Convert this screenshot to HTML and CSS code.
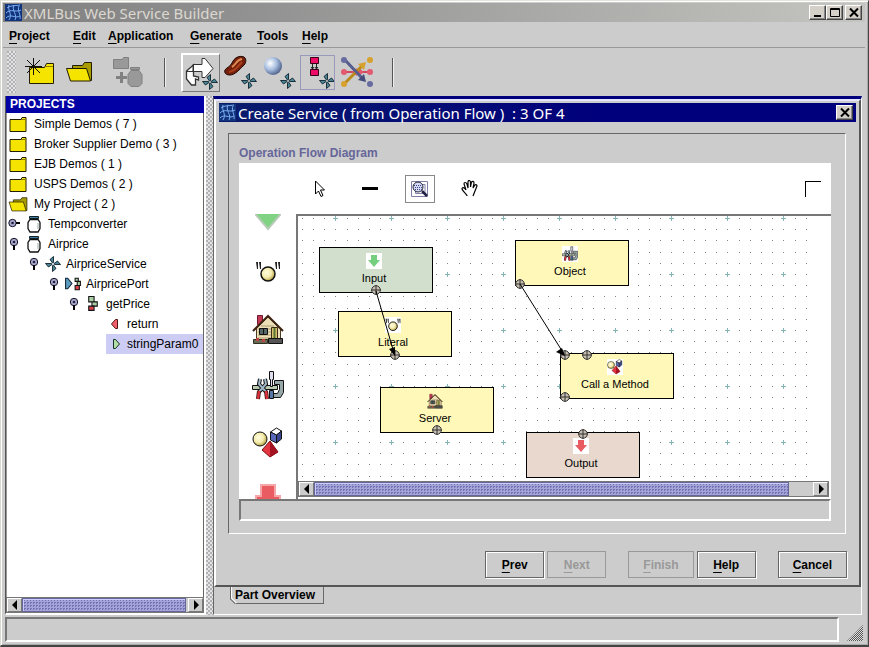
FILE: index.html
```html
<!DOCTYPE html>
<html lang="en">
<head>
<meta charset="utf-8">
<title>XMLBus Web Service Builder</title>
<link rel="stylesheet" href="styles.css">
</head>
<body>
<svg class="defs" aria-hidden="true">
  <defs>
    <radialGradient id="ball" cx=".35" cy=".35" r=".7"><stop offset="0" stop-color="#fff"/><stop offset=".5" stop-color="#a9bfe0"/><stop offset="1" stop-color="#4c5f88"/></radialGradient>
    <radialGradient id="gold" cx=".4" cy=".4" r=".7"><stop offset="0" stop-color="#fffde0"/><stop offset=".5" stop-color="#f4ecae"/><stop offset="1" stop-color="#a08820"/></radialGradient>
    <symbol id="logo" viewBox="0 0 17 17"><path fill="#12347c" d="M0 0h17v17H0z"/><path fill="none" stroke="#7fb0f4" d="M2 4c4-3 9-2 13-3M1 9c5-5 9 0 15-3M1 14c5-5 9 1 14-2M4 1c-2 5 4 9 0 15M9 1c-3 5 4 10 1 15M14 2c-2 4 2 9 1 13"/></symbol>
    <symbol id="folder" viewBox="0 0 19 17"><path fill="#f4e400" stroke="#221c00" d="M1.500 3.500h11l1-2h4v14h-16z"/><path fill="none" stroke="#8a7c00" d="M12.500 3.500h5"/></symbol>
    <symbol id="folder-open" viewBox="0 0 28 22"><path fill="#a89c00" stroke="#221c00" d="M7.500 7.500v-3h10l2-3h7v18h-3z"/><path fill="#f4e400" stroke="#221c00" d="M1.500 7.500h20l4 12.500H5.500z"/></symbol>
    <symbol id="jar" viewBox="0 0 14 18"><path fill="#3f7ca8" stroke="#122" d="M2.500 1.500h9v2h-9z"/><path fill="#fff" stroke="#111" stroke-width="1.300" d="M3 4.500h8l2 3v6l-2 3.500H3l-2-3.500v-6z"/><path stroke="#9aa" d="M11 8v6"/></symbol>
    <symbol id="pin-down" viewBox="0 0 12 14"><circle cx="6" cy="5" r="3.700" fill="#a8a8d0" stroke="#112"/><circle cx="6" cy="5" r="1.300" fill="#223"/><path stroke="#000" stroke-width="2" d="M6 8v5"/></symbol>
    <symbol id="pin-right" viewBox="0 0 12 14"><circle cx="4.500" cy="6" r="3.700" fill="#a8a8d0" stroke="#112"/><circle cx="4.500" cy="6" r="1.300" fill="#223"/><path stroke="#000" stroke-width="2" d="M8 6h4"/></symbol>
    <symbol id="fan" viewBox="0 0 16 16"><g fill="#4a8496" stroke="#0d242d" stroke-width=".9"><path d="M7.500 7L5 3.500 8.500.5v6z"/><path d="M9 7.500L12.500 5l3 3.500h-6z"/><path d="M8.500 9l2.500 3.500-3.500 3v-6z"/><path d="M7 8.500L3.500 11l-3-3.500h6z"/></g></symbol>
    <symbol id="blocks" viewBox="0 0 11 15"><g stroke="#111"><path fill="#a9d0a4" d="M1.500.5h5v5h-5zM4.500 5.500h5v4h-5z"/><path fill="#d8434c" d="M1.500 9.500h5v4h-5z"/></g></symbol>
    <symbol id="port-icon" viewBox="0 0 17 14"><path fill="#5b9cc0" stroke="#123" d="M1.500 1.500v10h2l4-5-4-5z"/><g stroke="#111"><path fill="#a9d0a4" d="M10.500 1.500h3v3h-3zM12.500 4.500h3v4h-3z"/><path fill="#d8434c" d="M10.500 8.500h4v4h-4z"/></g></symbol>
    <symbol id="down" viewBox="0 0 26 32"><path stroke-width="2" d="M6 1h14v11h5v4L13 30 1 16v-4h5z"/></symbol>
    <symbol id="house" viewBox="0 0 32 32"><path fill="#c43a55" stroke="#6d1b2b" d="M5.500 2.500h5v9h-5z"/><path fill="#ece0b8" stroke="#4b3b20" d="M4.500 15L16 4l12.500 12v11h-24z"/><path stroke="#b09c70" d="M9 13h13M6 16h20M6 19h20M6 22h20M6 25h20"/><path fill="#d8c070" stroke="#3c2a14" d="M19.500 14.500h6v12h-6z"/><path stroke="#573" stroke-width="2" d="M22.500 15v11"/><path fill="#566" stroke="#111" d="M7.500 15.500h8v6h-8zM11.500 15.500v6"/><path fill="none" stroke="#3e2312" stroke-width="2" d="M1 18L16 3l15 15"/><path fill="#656b56" stroke="#33301f" d="M1.500 26.500h14v4h-14z"/><path fill="#555" stroke="#111" d="M16.500 25.500h14v5h-14z"/><path fill="#b44" d="M4 25h3v3H4zM10 26h3v3h-3z"/></symbol>
    <symbol id="tools" viewBox="0 0 32 32"><path fill="#98a8a8" stroke="#111" d="M22.500 10.500h9v12l-3 5h-8v-4h5l2-4v-5h-5z"/><path fill="#b9cab0" stroke="#111" d="M.5 15.500h25v4H.5z"/><path fill="#dde" stroke="#111" d="M17.500 1.500h4v8h-1v7h-2v-7h-1z"/><path fill="#5577a8" stroke="#111" d="M17.500 20.500h4v8h-4z"/><path fill="none" stroke="#111" stroke-width="4" d="M8 9l-1 5 7 8M13 9l1 5-7 8"/><path fill="none" stroke="#9fb6c4" stroke-width="2" d="M8 9l-1 5 7 8M13 9l1 5-7 8"/><path fill="none" stroke="#311" stroke-width="4" d="M7 21l-1 8M14 21l1 8"/><path fill="none" stroke="#d8333c" stroke-width="2.500" d="M7 21l-1 8M14 21l1 8"/></symbol>
    <symbol id="shapes" viewBox="0 0 32 32"><circle cx="8" cy="12" r="7" fill="url(#gold)" stroke="#111"/><path fill="#fff" stroke="#111" d="M18.500 5l6-4 5 3-5 4z"/><path fill="#5868b8" stroke="#111" d="M18.500 5l6 3v8l-6-3z"/><path fill="#3b468c" stroke="#111" d="M24.500 8l5-4v8l-5 4z"/><path fill="#e33540" stroke="#711" d="M18 14l8 11-8 5-8-7z"/><path fill="#a31322" d="M18 14l8 11-8 5z"/></symbol>
    <symbol id="quote-ball" viewBox="0 0 26 22"><path fill="#222" d="M1 1h2v7H2zM4 1h2v7H5zM20 1h2v7h-1zM23 1h2v7h-1z"/><circle cx="13" cy="13" r="7" fill="url(#gold)" stroke="#111" stroke-width="1.500"/></symbol>
    <symbol id="port" viewBox="0 0 10 10"><circle cx="5" cy="5" r="4.300" fill="#c8beb0" stroke="#333"/><path stroke="#333" d="M5 0v10M0 5h10"/></symbol>
  </defs>
</svg>

<div class="window">
  <header class="titlebar">
    <svg class="logo"><use href="#logo"/></svg>
    <h1>XMLBus Web Service Builder</h1>
    <div class="win-buttons">
      <button aria-label="Minimize"><svg viewBox="0 0 12 11"><path stroke="#000" stroke-width="2" d="M2 9h7"/></svg></button>
      <button aria-label="Maximize"><svg viewBox="0 0 12 11"><path fill="none" stroke="#000" d="M1.500 1.500h9v8h-9zM1 2.500h10"/></svg></button>
      <button class="close" aria-label="Close"><svg viewBox="0 0 12 11"><path stroke="#000" stroke-width="2" d="M2 1.500l8 8M10 1.500l-8 8"/></svg></button>
    </div>
  </header>

  <nav class="menubar">
    <button><u>P</u>roject</button><button><u>E</u>dit</button><button><u>A</u>pplication</button><button><u>G</u>enerate</button><button><u>T</u>ools</button><button><u>H</u>elp</button>
  </nav>

  <div class="toolbar">
    <span class="grip"></span>
    <button class="tool" aria-label="New project"><svg width="30" height="28" viewBox="0 0 30 28"><path fill="#f4e400" stroke="#221c00" d="M4.500 9.500h15l2-4h7v20h-24z"/><path fill="none" stroke="#8a7c00" d="M21 8.500h7"/><path stroke="#111" d="M8.500 0v17M0 8.500h17M2 2l13 13M15 2L2 15"/></svg></button>
    <button class="tool" aria-label="Open project"><svg width="28" height="22"><use href="#folder-open"/></svg></button>
    <button class="tool wide" aria-label="Add application" disabled><svg width="32" height="32" viewBox="0 0 32 32"><g fill="#999" stroke="#808080"><path d="M1.500 3.500h9l1-2h5v11h-15z"/><path d="M18.500 11.500h9v2h-9zM19 14.500h8l3 4v9l-3 3h-8l-3-3v-9z"/></g><path stroke="#808080" stroke-width="3" d="M4 21.500h11M9.500 16v11"/></svg></button>
    <span class="separator"></span>
    <button class="tool pressed" aria-label="Create service"><svg width="34" height="34" viewBox="0 0 34 34"><path fill="#fff" stroke="#333" stroke-width="1.300" d="M10 8.500L2.500 15v8l5 6h4v-6l3 1v-3l-5-1v-6l3-2z"/><path fill="#fff" stroke="#333" d="M9 8.500h9v-6h3l8 10-8 9h-3v-6H9zM2.500 15.500h7M9.500 8.500v7"/><use href="#fan" x="18" y="18" width="16" height="16"/></svg></button>
    <button class="tool" aria-label="Service from bean"><svg width="34" height="34" viewBox="0 0 34 34"><path fill="#75200c" stroke="#210802" d="M2 15c2-3 5-3 7-7 2-5 7-8 12-6 3 2 2 7-1 9-3 3-8 9-13 9-4 0-6-2-5-5z"/><path fill="none" stroke="#e08a54" stroke-width="2" d="M9 12c4-2 4-7 10-8"/><path fill="none" stroke="#aa401c" stroke-width="2" d="M6 17c7-1 10-7 13-10"/><use href="#fan" x="18" y="18" width="16" height="16"/></svg></button>
    <button class="tool" aria-label="Service from object"><svg width="34" height="34" viewBox="0 0 34 34"><circle cx="11" cy="11" r="9" fill="url(#ball)"/><use href="#fan" x="18" y="18" width="16" height="16"/></svg></button>
    <button class="tool outlined" aria-label="Service from operation flow"><svg width="34" height="34" viewBox="0 0 34 34"><g fill="#ee0a66" stroke="#330018"><path d="M9.500 2.500h8v6h-8zM9.500 14.500h8v6h-8z"/></g><path fill="none" stroke="#222" d="M11.500 9v5M15.500 9v5M10 12l1.500 2 1.500-2M14 12l1.500 2 1.500-2"/><use href="#fan" x="18" y="18" width="16" height="16"/></svg></button>
    <button class="tool" aria-label="Router"><svg width="34" height="34" viewBox="0 0 34 34"><path stroke="#d2475c" stroke-width="2" d="M4 17h25"/><path fill="#e15a70" d="M12 17l5-4v8zM24 17l-5-4v8z"/><path stroke="#bb881c" stroke-width="3" d="M5 28L22 11"/><path fill="#d6a22d" d="M26 7l-2 8-6-6z"/><path stroke="#565c8c" stroke-width="3" d="M5 5l17 18"/><path fill="#454b7c" d="M26 27l-8-2 6-6z"/><circle cx="4" cy="5" r="3" fill="#676ca0"/><circle cx="4" cy="17" r="3" fill="#e15a70"/><circle cx="4" cy="29" r="3" fill="#d6a22d"/><circle cx="30" cy="5" r="3" fill="#d6a22d"/><circle cx="30" cy="17" r="3" fill="#e15a70"/><circle cx="30" cy="29" r="3" fill="#676ca0"/></svg></button>
    <span class="separator last"></span>
  </div>

  <div class="workspace">
    <aside class="projects">
      <h2>PROJECTS</h2>
      <ul class="tree">
        <li><span class="row folder"><svg class="ico"><use href="#folder"/></svg>Simple Demos ( 7 )</span></li>
        <li><span class="row folder"><svg class="ico"><use href="#folder"/></svg>Broker Supplier Demo ( 3 )</span></li>
        <li><span class="row folder"><svg class="ico"><use href="#folder"/></svg>EJB Demos ( 1 )</span></li>
        <li><span class="row folder"><svg class="ico"><use href="#folder"/></svg>USPS Demos ( 2 )</span></li>
        <li><span class="row folder"><svg class="ico"><use href="#folder-open"/></svg>My Project ( 2 )</span>
          <ul>
            <li><span class="row app"><svg class="pin"><use href="#pin-right"/></svg><svg class="ico"><use href="#jar"/></svg>Tempconverter</span></li>
            <li><span class="row app"><svg class="pin"><use href="#pin-down"/></svg><svg class="ico"><use href="#jar"/></svg>Airprice</span>
              <ul class="nested">
                <li><span class="row"><svg class="pin"><use href="#pin-down"/></svg><svg class="ico"><use href="#fan"/></svg>AirpriceService</span>
                  <ul class="nested">
                    <li><span class="row"><svg class="pin"><use href="#pin-down"/></svg><svg class="ico"><use href="#port-icon"/></svg>AirpricePort</span>
                      <ul class="nested">
                        <li><span class="row"><svg class="pin"><use href="#pin-down"/></svg><svg class="ico"><use href="#blocks"/></svg>getPrice</span>
                          <ul class="leaves">
                            <li><span class="row"><svg class="ico" viewBox="0 0 18 12"><path fill="#f0606c" stroke="#511" d="M10.500 1.500v9h-2l-4-4.500 4-4.500z"/></svg>return</span></li>
                            <li><span class="row selected"><svg class="ico" viewBox="0 0 18 12"><path fill="#b4dca8" stroke="#132" d="M6.500 1.500v9h2l4-4.500-4-4.500z"/></svg>stringParam0</span></li>
                          </ul>
                        </li>
                      </ul>
                    </li>
                  </ul>
                </li>
              </ul>
            </li>
          </ul>
        </li>
      </ul>
      <div class="scrollbar">
        <button aria-label="Scroll left"><svg viewBox="0 0 6 10"><path d="M5 0v10L0 5z"/></svg></button>
        <span class="thumb"></span><span class="track"></span>
        <button aria-label="Scroll right"><svg viewBox="0 0 6 10"><path d="M1 0v10l5-5z"/></svg></button>
      </div>
    </aside>
    <div class="divider"></div>

    <main class="desktop">
      <section class="dialog">
        <header class="dialog-title">
          <svg class="logo"><use href="#logo"/></svg>
          <h2>Create Service ( from Operation Flow )&nbsp; : 3 OF 4</h2>
          <div class="win-buttons"><button aria-label="Close dialog"><svg viewBox="0 0 12 11"><path stroke="#000" stroke-width="2" d="M2 1.500l8 8M10 1.500l-8 8"/></svg></button></div>
        </header>
        <div class="group">
          <h3>Operation Flow Diagram</h3>
          <div class="editor">
            <div class="editor-tools">
              <button aria-label="Select"><svg width="12" height="18" viewBox="0 0 12 18"><path fill="#fff" stroke="#000" d="M1.500 1v13l3-3 2.500 5.500 2-1L6.500 10h4z"/></svg></button>
              <button aria-label="Line"><svg width="16" height="4"><path d="M0 0h16v3H0z"/></svg></button>
              <button class="zoom" aria-label="Zoom"><span><svg width="18" height="18" viewBox="0 0 18 18"><path fill="none" stroke="#8080a8" d="M.5 1.500h16v15H.5zM5 4.500h9v9H4.500z"/><circle cx="7" cy="7" r="5" fill="#d4d8f4" stroke="#223"/><path stroke="#3a4488" stroke-dasharray="1 1" d="M3 5.500h8M4 7.500h7M4 9.500h7"/><path stroke="#224" stroke-width="2.500" d="M11 11l5 5"/></svg></span></button>
              <button aria-label="Pan"><svg width="18" height="18" viewBox="0 0 18 18"><path fill="#fff" stroke="#000" stroke-width="1.200" d="M6 16c0-2-4-4-5-7 0-2 2-2 4 1L3 4c0-2 2-2 3 0l1 4V2c0-2 2-2 2.500 0v5l1-5c1-1 2.500-1 2.500 1l-1 5 2-3c1-1 2 0 2 1l-2 5-2 5"/></svg></button>
              <span class="corner"></span>
            </div>
            <div class="palette">
              <button aria-label="Input"><svg class="input-arrow" width="26" height="32"><use href="#down"/></svg></button>
              <button aria-label="Literal"><svg width="26" height="22"><use href="#quote-ball"/></svg></button>
              <button aria-label="Server"><svg width="32" height="32"><use href="#house"/></svg></button>
              <button aria-label="Object"><svg width="32" height="32"><use href="#tools"/></svg></button>
              <button aria-label="Call a Method"><svg width="32" height="32"><use href="#shapes"/></svg></button>
              <button aria-label="Output"><svg class="output-arrow" width="26" height="32"><use href="#down"/></svg></button>
            </div>
            <div class="canvas-frame">
              <div class="canvas">
                <svg class="grid-dots" aria-hidden="true"><defs><pattern id="dots" x="4" y="-9" width="56" height="56" patternUnits="userSpaceOnUse"><path stroke="#808686" d="M0 .5h1M11 .5h1M22 .5h1M33 .5h1M45 .5h1M0 11.500h1M11 11.500h1M22 11.500h1M33 11.500h1M45 11.500h1M0 22.500h1M11 22.500h1M22 22.500h1M33 22.500h1M45 22.500h1M0 33.500h1M11 33.500h1M22 33.500h1M33 33.500h1M45 33.500h1M0 45.500h1M11 45.500h1M22 45.500h1M33 45.500h1M45 45.500h1"/><path stroke="#86b4b4" d="M31 11.500h5M33.500 9v5"/></pattern></defs><rect width="100%" height="100%" fill="url(#dots)"/></svg>
                <div class="node n-input"><svg><rect width="16" height="16" fill="#fff"/><path fill="#76cf7e" d="M5 2h6v5h3l-6 7-6-7h3z"/></svg>Input</div>
                <div class="node n-object"><svg><rect width="16" height="16" fill="#fff"/><use href="#tools" width="16" height="16"/></svg>Object</div>
                <div class="node n-literal"><svg><rect width="16" height="16" fill="#fff"/><use href="#quote-ball" y="1" width="16" height="14"/></svg>Literal</div>
                <div class="node n-method"><svg><rect width="16" height="16" fill="#fff"/><use href="#shapes" width="16" height="16"/></svg>Call a Method</div>
                <div class="node n-server"><svg><use href="#house" width="16" height="16"/></svg>Server</div>
                <div class="node n-output"><svg><rect width="16" height="16" fill="#fff"/><path fill="#e85c62" d="M5 2h6v5h3l-6 7-6-7h3z"/></svg>Output</div>
                <svg class="links" aria-hidden="true">
                  <g><use href="#port" x="73" y="69" width="10" height="10"/><use href="#port" x="92" y="134" width="10" height="10"/><use href="#port" x="134" y="209" width="10" height="10"/><use href="#port" x="217" y="63" width="10" height="10"/><use href="#port" x="262" y="134" width="10" height="10"/><use href="#port" x="284" y="134" width="10" height="10"/><use href="#port" x="262" y="176" width="10" height="10"/><use href="#port" x="280" y="213" width="10" height="10"/></g>
                  <path stroke="#000" d="M78 75L96 137M222 68L266 138"/>
                  <path d="M97 140l-6-7 6-2zM267 140l-9-4 6-4z"/>
                </svg>
              </div>
              <div class="scrollbar">
                <button aria-label="Scroll diagram left"><svg viewBox="0 0 6 10"><path d="M5 0v10L0 5z"/></svg></button>
                <span class="thumb"></span><span class="track long"></span>
                <button aria-label="Scroll diagram right"><svg viewBox="0 0 6 10"><path d="M1 0v10l5-5z"/></svg></button>
              </div>
            </div>
          </div>
          <div class="message"></div>
        </div>
        <footer class="actions">
          <div><button><u>P</u>rev</button><button disabled><u>N</u>ext</button></div>
          <div><button disabled><u>F</u>inish</button><button><u>H</u>elp</button></div>
          <div><button><u>C</u>ancel</button></div>
        </footer>
      </section>
      <button class="tab"><svg viewBox="0 0 94 17" preserveAspectRatio="none" aria-hidden="true"><path fill="none" stroke="#666" d="M6 16.500h87.500V0"/><path fill="none" stroke="#fff" d="M1.500 0v11l5 5"/><path fill="none" stroke="#666" d="M.5 0v12l5 5"/></svg><span>Part Overview</span></button>
    </main>
  </div>

  <footer class="statusbar"><div class="status"></div><span class="resizer"></span></footer>
</div>
</body>
</html>
```
FILE: styles.css
```css
* { box-sizing: border-box; }
body { margin: 0; background: #ccc; font: 12px "Liberation Sans", Arial, sans-serif; color: #000; }
button { font: inherit; color: inherit; background: none; border: 0; padding: 0; margin: 0; }
h1, h2, h3, ul { margin: 0; padding: 0; }
ul { list-style: none; }
svg { display: block; flex: none; }
u { text-decoration: underline; text-underline-offset: 3px; text-decoration-thickness: 1px; }
.defs { position: absolute; width: 0; height: 0; }

.window { height: 100vh; display: flex; flex-direction: column; padding: 2px 3px 3px 2px; border: solid; border-width: 1px 1px 2px; border-color: #e4e4dc #444 #444 #d8d8d0; box-shadow: inset 1px 1px #fff, inset -1px -1px #aaa; }

.titlebar { height: 19px; flex: none; display: flex; align-items: center; padding: 0 3px 0 2px; background: linear-gradient(90deg, #808080, #929292 30%, #c4c4c0); }
.logo { width: 17px; height: 17px; margin-right: 2px; }
.titlebar h1, .dialog-title h2 { flex: 1; font: 15px/18px "Noto Sans", sans-serif; white-space: nowrap; }
.titlebar h1 { color: #dcd8d0; }
.win-buttons { display: flex; }
.win-buttons button { width: 17px; height: 15px; display: grid; place-items: center; background: #d4d0c8; border: 1px solid; border-color: #fff #444 #444 #fff; box-shadow: inset -1px -1px #888; }
.win-buttons svg { width: 12px; height: 11px; }
.win-buttons .close { margin-left: 2px; }

.menubar { flex: none; height: 26px; display: grid; grid-template-columns: 64px 35px 82px 67px 45px auto; justify-content: start; padding: 2px 0 0 6px; border-bottom: 1px solid #999; font-weight: bold; }
.menubar button { text-align: left; }

.toolbar { flex: none; height: 48px; display: flex; align-items: center; padding-left: 4px; }
.grip, .divider { background: repeating-conic-gradient(#e4e4e4 0 25%, #b0b0b4 0 50%) 0 0 / 4px 4px; }
.grip { width: 9px; height: 42px; margin-right: 4px; }
.tool { width: 39px; height: 39px; display: grid; place-items: center; }
.tool.wide { width: 60px; }
.tool.pressed { border: solid; border-width: 2px 1px 1px 2px; border-color: #fff #777 #777 #fff; }
.tool.outlined { outline: 1px solid #9999bb; outline-offset: -3px; }
.separator { width: 2px; height: 29px; margin: 0 15px 0 6px; background: linear-gradient(90deg, #555 50%, #eee 50%); }
.separator.last { margin-left: 16px; }

.workspace { flex: 1; min-height: 0; display: flex; padding: 0 3px 0 2px; }
.projects { flex: 0 0 201px; display: flex; flex-direction: column; border-left: 1px solid #555; border-right: 2px solid #fff; border-bottom: 2px solid #fff; }
.projects h2 { flex: none; height: 17px; background: #0000a4; color: #fff; font-size: 12px; line-height: 17px; padding-left: 4px; }
.tree { flex: 1; min-height: 0; padding-top: 1px; background: #fff; overflow: hidden; border-right: 1px solid #666; border-left: 1px solid #999; }
.row { display: flex; align-items: center; height: 20px; gap: 4px; white-space: nowrap; }
.row.folder { gap: 6px; padding-left: 1px; }
.row .ico { width: 18px; height: 16px; }
.row.folder .ico { width: 20px; height: 17px; }
.row .pin { width: 12px; height: 14px; }
.row.app .ico { width: 20px; height: 18px; }
.tree ul .row { padding-left: 1px; }
.nested { padding-left: 20px; }
.leaves { padding-left: 39px; }
.tree .leaves .row { gap: 2px; }
.selected { background: #ccccf4; }

.scrollbar { flex: none; height: 16px; display: flex; border: 1px solid #777; background: #ccc; }
.scrollbar button { width: 15px; display: grid; place-items: center; border: 1px solid; border-color: #fff #777 #777 #fff; }
.scrollbar button svg { width: 6px; height: 10px; }
.thumb { flex: 1; border: 1px solid #666699; background: conic-gradient(#7474b4 25%, #a4a4d8 0) 0 0 / 3px 3px; box-shadow: inset 1px 1px #ccccff; }
.track { width: 2px; }
.track.long { width: 24px; }
.divider { flex: none; width: 7px; }

.desktop { flex: 1; min-width: 0; display: flex; flex-direction: column; align-items: flex-start; border-top: 3px solid #00007c; border-left: 1px solid #666; border-bottom: 1px solid #fff; border-right: 1px solid #fff; }
.dialog { flex: 1; min-height: 0; align-self: stretch; display: flex; flex-direction: column; padding: 2px 3px 7px; border: 2px solid; border-color: #e4e4ff #555 #555 #fff; }
.dialog-title { flex: none; height: 19px; display: flex; align-items: center; padding: 0 3px 0 0; background: linear-gradient(90deg, #0a1c6c, #00007c 60%); color: #fff; }
.group { flex: 1; min-height: 0; margin: 11px 10px 0 9px; padding: 10px 14px 12px 10px; display: flex; flex-direction: column; border: 1px solid; border-color: #666 #fff #fff #666; }
.group h3 { font-size: 12px; line-height: 18px; color: #666699; margin-bottom: 1px; }
.editor { flex: 1; min-height: 0; display: grid; grid-template: 51px minmax(0, 1fr) / 57px minmax(0, 1fr); background: #fff; }
.editor-tools { grid-column: 1 / -1; display: flex; align-items: center; padding: 0 10px 0 56px; }
.editor-tools button { width: 50px; height: 30px; display: grid; place-items: center; }
.zoom span { width: 30px; height: 28px; display: grid; place-items: center; border: 1px solid #888; }
.corner { width: 16px; height: 16px; margin-left: auto; border: solid #000; border-width: 1px 0 0 1px; }
.palette { overflow: hidden; display: flex; flex-direction: column; }
.palette button { flex: 0 0 57px; display: grid; place-items: center; }
.palette button:first-child { margin-top: -28px; }
.input-arrow { fill: #7fd383; stroke: #b7cbb7; }
.output-arrow { fill: #e85c62; stroke: #f4a6a8; }
.canvas-frame { display: flex; flex-direction: column; min-height: 0; padding: 0 2px 2px 0; border: solid #777; border-width: 2px 0 0 2px; }
.canvas { flex: 1; min-height: 0; position: relative; overflow: hidden; }
.canvas .links { position: absolute; inset: 0; width: 100%; height: 100%; }
.grid-dots { position: absolute; top: 0; left: 0; width: calc(100% - 20px); height: 100%; }
.node { position: absolute; width: 114px; height: 46px; padding: 5px 4px 0 0; display: flex; flex-direction: column; align-items: center; gap: 3px; border: 1px solid #000; background: #fff8b8; font-size: 11px; line-height: 13px; }
.node svg { width: 16px; height: 16px; }
.n-input { left: 21px; top: 31px; background: #d3dfcd; }
.n-object { left: 217px; top: 24px; }
.n-literal { left: 40px; top: 95px; }
.n-method { left: 262px; top: 137px; }
.n-server { left: 82px; top: 171px; }
.n-output { left: 228px; top: 216px; background: #e8d8ce; }
.message { flex: none; height: 22px; border: 2px solid; border-color: #777 #fff #fff #777; }

.actions { flex: none; display: flex; justify-content: flex-end; gap: 22px; padding: 17px 9px 0 0; }
.actions div { display: flex; gap: 3px; }
.actions button { height: 27px; min-width: 59px; padding: 0 14px; font-weight: bold; border: 1px solid #666; box-shadow: 1px 1px #fff, inset 1px 1px #fff; }
.actions button:disabled { color: #999; border-color: #999; box-shadow: none; }
.tab { flex: none; position: relative; height: 17px; margin: 0 0 10px 16px; padding: 0 9px 0 5px; font-weight: bold; line-height: 15px; }
.tab svg { position: absolute; inset: 0; width: 100%; height: 100%; }

.statusbar { flex: none; height: 27px; display: flex; padding: 2px 0 0 2px; }
.status { flex: 1; border: 2px solid; border-color: #777 #fff #fff #777; }
.resizer { width: 16px; height: 16px; margin: 8px 2px 0 8px; clip-path: polygon(100% 0, 100% 100%, 0 100%); background: repeating-conic-gradient(#555 0 25%, #ddd 0 50%) 0 0 / 2px 2px; }
```
